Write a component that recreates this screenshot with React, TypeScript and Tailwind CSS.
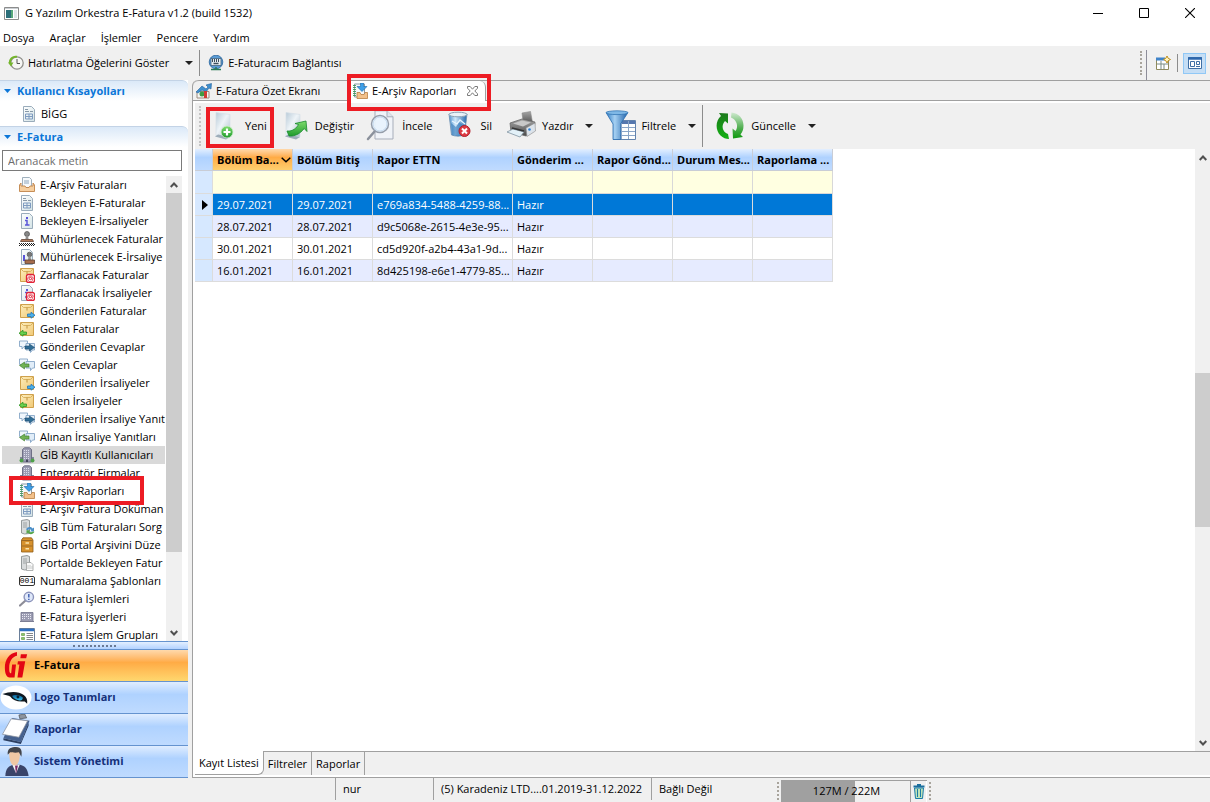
import type { ReactNode } from "react";

interface TreeItem {
  label: string;
  icon: ReactNode;
}

interface Report {
  start: string;
  end: string;
  ettn: string;
  status: string;
}

const reports: Report[] = [
  { start: "29.07.2021", end: "29.07.2021", ettn: "e769a834-5488-4259-88...", status: "Hazır" },
  { start: "28.07.2021", end: "28.07.2021", ettn: "d9c5068e-2615-4e3e-95...", status: "Hazır" },
  { start: "30.01.2021", end: "30.01.2021", ettn: "cd5d920f-a2b4-43a1-9d...", status: "Hazır" },
  { start: "16.01.2021", end: "16.01.2021", ettn: "8d425198-e6e1-4779-85...", status: "Hazır" }
];

/* ---------- gradients shared by the icons ---------- */

function Gradients() {
  return (
    <svg className="absolute h-0 w-0" aria-hidden="true">
      <defs>
        <linearGradient id="paper" x1="0" y1="0" x2="1" y2="1">
          <stop offset="0" stopColor="#ffffff" />
          <stop offset="1" stopColor="#d3e3e6" />
        </linearGradient>
        <linearGradient id="pane" x1="0" y1="0" x2="1" y2="1">
          <stop offset="0" stopColor="#b9cbd8" />
          <stop offset="0.45" stopColor="#eef4f8" />
          <stop offset="1" stopColor="#aebfcb" />
        </linearGradient>
        <linearGradient id="green" x1="0" y1="0" x2="0" y2="1">
          <stop offset="0" stopColor="#7fdc6e" />
          <stop offset="1" stopColor="#1f9a2c" />
        </linearGradient>
        <linearGradient id="deepGreen" x1="0" y1="0" x2="0" y2="1">
          <stop offset="0" stopColor="#1c7a1c" />
          <stop offset="1" stopColor="#12b012" />
        </linearGradient>
        <linearGradient id="paleGreen" x1="0" y1="0" x2="0" y2="1">
          <stop offset="0" stopColor="#cfe9cf" />
          <stop offset="0.6" stopColor="#4fae4f" />
          <stop offset="1" stopColor="#0f9a0f" />
        </linearGradient>
        <linearGradient id="gold" x1="0" y1="0" x2="1" y2="1">
          <stop offset="0" stopColor="#fdeebc" />
          <stop offset="1" stopColor="#f0c976" />
        </linearGradient>
        <linearGradient id="funnel" x1="0" y1="0" x2="1" y2="0">
          <stop offset="0" stopColor="#2f7cc4" />
          <stop offset="0.4" stopColor="#a5d0f2" />
          <stop offset="1" stopColor="#1c5fa8" />
        </linearGradient>
        <linearGradient id="steel" x1="0" y1="0" x2="0" y2="1">
          <stop offset="0" stopColor="#a5a5a5" />
          <stop offset="1" stopColor="#4b4b4b" />
        </linearGradient>
        <linearGradient id="bin" x1="0" y1="0" x2="1" y2="0">
          <stop offset="0" stopColor="#4f93cf" />
          <stop offset="0.35" stopColor="#cfe8fa" />
          <stop offset="1" stopColor="#2268ad" />
        </linearGradient>
        <linearGradient id="iris" x1="0" y1="0" x2="0" y2="1">
          <stop offset="0" stopColor="#0a5f96" />
          <stop offset="1" stopColor="#37c1ee" />
        </linearGradient>
      </defs>
    </svg>
  );
}

/* ---------- 16px icons ---------- */

function Icon16({ children }: { children: ReactNode }) {
  return (
    <svg viewBox="0 0 16 16" className="h-4 w-4 shrink-0" fill="none" aria-hidden="true">
      {children}
    </svg>
  );
}

const page = <path d="M2.5.5h8l3 3v12h-11z" fill="url(#paper)" stroke="#9aacbb" />;

const envelope = (
  <>
    <path d="M1.500 1.500h13v13h-13z" fill="url(#gold)" stroke="#cfa14c" />
    <path d="m2 2 2.500 2.500h7L14 2" stroke="#d9b25f" />
    <path d="M8 4.500v3" stroke="#c0923f" />
  </>
);

const atSign = (
  <>
    <rect x="7.500" y="7.500" width="8" height="8" rx="2" fill="#fff" stroke="#e02338" strokeWidth="1.300" />
    <circle cx="11.400" cy="11.500" r="1.200" stroke="#e02338" />
    <path d="M13.800 13.400a2.800 2.800 0 1 1 .4-2.200c.2 1.600-1.500 1.700-1.500.4" stroke="#e02338" strokeWidth=".8" />
  </>
);

const sendArrow = (
  <path d="M8.500 11h3.500V9.200l4 3-4 3v-1.700H8.500z" fill="#4ab0ea" stroke="#2173b5" strokeWidth=".8" />
);

const receiveArrow = (
  <path d="M7.500 11H4V9.200l-4 3 4 3v-1.700h3.500z" fill="#6bd04f" stroke="#2f9424" strokeWidth=".8" />
);

const infoMark = (
  <>
    <rect x="7" y="4" width="2" height="2" fill="#5a55d8" />
    <path d="M6 7.500h2v4M6 12h4.500" stroke="#5a55d8" strokeWidth="1.500" />
  </>
);

const formPage = (
  <>
    {page}
    <path d="M4 3.500h3M4 5.500h4M9 5.500h3" stroke="#8798a8" />
    <path d="M4.500 8h7v5h-7zM4.500 10.500h7M8 8v5" stroke="#7f9bc0" />
  </>
);

const stamp = (
  <>
    <circle cx="8" cy="3" r="2.500" fill="#888" stroke="#4c4c4c" strokeWidth=".7" />
    <path d="M7 5h2l.6 3H6.400z" fill="#8e8e8e" />
    <path d="M2.500 8.500h11l1 2h-13z" fill="#b57c5c" stroke="#5e4132" strokeWidth=".8" />
  </>
);

const building = (
  <>
    <path d="M1 10h3v5H1zM12 10h3v5h-3z" fill="#84869c" />
    <path d="M3.500 2.500 5.500.8h5l2 1.700V15h-9z" fill="#9b9cb2" stroke="#66687f" strokeWidth=".9" />
    <path d="M5.500 3v9M7.500 3v9M9.500 3v9" stroke="#dcdcea" strokeWidth="1" strokeDasharray="1 1" />
    <path d="M7 12.500h2V15H7z" fill="#45475c" />
  </>
);

const server = (
  <>
    <path d="M2.500 1.500 8 .5l2.500 1v13l-5 .5-3-1z" fill="#d9dcdd" stroke="#7f8587" strokeWidth=".8" />
    <path d="M4 4h4M4 6h4M4 8h4" stroke="#8f9698" strokeWidth=".8" />
  </>
);

const bubbles = (
  <>
    <path d="M.5 2h8v5.500H5L3 10V7.500H.5z" fill="#f0f6fc" stroke="#86a6c6" strokeWidth=".9" />
    <path d="M7 4.500h8.500v6.500h-2l-2 2.500V11H7z" fill="#e1edf8" stroke="#86a6c6" strokeWidth=".9" />
  </>
);

const repliesOut = (
  <Icon16>
    {bubbles}
    <path d="M6 7h4.500V5l5 3.500-5 3.500v-2H6z" fill="#2f6d96" stroke="#1f4c6d" strokeWidth=".6" />
  </Icon16>
);

const repliesIn = (
  <Icon16>
    {bubbles}
    <path d="M10 7H5.500V5l-5 3.500 5 3.500v-2H10z" fill="#72b255" stroke="#3c7d2a" strokeWidth=".6" />
  </Icon16>
);

const reportIcon = (
  <Icon16>
    <path d="M2.500 1h10v13h-10z" fill="#f4f7fa" stroke="#8b9aa6" />
    <path d="M1 2.500h3M1 4.500h3M1 6.500h3M1 8.500h3M1 10.500h3M1 12.500h3" stroke="#3f9a5c" strokeWidth=".9" />
    <path d="M8.500 0h3v3.500H15L10 8.500l-5-5h3.500z" fill="#3d9fe8" stroke="#1b69ab" strokeWidth=".6" />
    <path d="M5 9.500h3l1 2h3l1-2h2.500v6H5z" fill="#f2c08a" stroke="#b97f42" strokeWidth=".8" />
  </Icon16>
);

const treeItems: TreeItem[] = [
  {
    label: "E-Arşiv Faturaları",
    icon: (
      <Icon16>
        <path d="M3.500.5h7l2 2v8h-9z" fill="#f7fafc" stroke="#95a7b5" strokeWidth=".9" />
        <path d="M5 4h5M5 6h5" stroke="#7f9cb5" strokeWidth=".9" />
        <path d="M.5 8 2 6v3h4l1 1.500h3L11 9h3V6l1.500 2v6.500H.5z" fill="#f6cfa0" stroke="#c08349" strokeWidth=".9" />
      </Icon16>
    )
  },
  { label: "Bekleyen E-Faturalar", icon: <Icon16>{formPage}</Icon16> },
  { label: "Bekleyen E-İrsaliyeler", icon: <Icon16>{page}{infoMark}</Icon16> },
  {
    label: "Mühürlenecek Faturalar",
    icon: (
      <Icon16>
        {stamp}
        <path d="M0 12.500h16M0 14.500h16" stroke="#222" strokeDasharray="1 1" />
        <path d="M1 13.500h15" stroke="#222" strokeDasharray="1 1" />
      </Icon16>
    )
  },
  {
    label: "Mühürlenecek E-İrsaliye",
    icon: (
      <Icon16>
        {page}
        <path d="M5 6v6" stroke="#5a55d8" strokeWidth="2" />
        <circle cx="10.500" cy="5.500" r="2.300" fill="#777" stroke="#4c4c4c" strokeWidth=".7" />
        <path d="M9.500 7h2l.5 4h-3z" fill="#8e8e8e" />
        <path d="M6 11h9.500v3.500H6z" fill="#a56c4c" stroke="#5e4132" strokeWidth=".8" />
      </Icon16>
    )
  },
  { label: "Zarflanacak Faturalar", icon: <Icon16>{envelope}{atSign}</Icon16> },
  { label: "Zarflanacak İrsaliyeler", icon: <Icon16>{page}{infoMark}{atSign}</Icon16> },
  { label: "Gönderilen Faturalar", icon: <Icon16>{envelope}{sendArrow}</Icon16> },
  { label: "Gelen Faturalar", icon: <Icon16>{envelope}{receiveArrow}</Icon16> },
  { label: "Gönderilen Cevaplar", icon: repliesOut },
  { label: "Gelen Cevaplar", icon: repliesIn },
  { label: "Gönderilen İrsaliyeler", icon: <Icon16>{envelope}{sendArrow}</Icon16> },
  { label: "Gelen İrsaliyeler", icon: <Icon16>{envelope}{receiveArrow}</Icon16> },
  { label: "Gönderilen İrsaliye Yanıt", icon: repliesOut },
  { label: "Alınan İrsaliye Yanıtları", icon: repliesIn },
  {
    label: "GİB Kayıtlı Kullanıcıları",
    icon: (
      <Icon16>
        {building}
        <circle cx="2.500" cy="13.500" r="2" fill="#4f9f4a" />
        <circle cx="13.500" cy="13.500" r="2" fill="#4f9f4a" />
      </Icon16>
    )
  },
  { label: "Entegratör Firmalar", icon: <Icon16>{building}</Icon16> },
  { label: "E-Arşiv Raporları", icon: reportIcon },
  { label: "E-Arşiv Fatura Doküman", icon: <Icon16>{formPage}</Icon16> },
  {
    label: "GİB Tüm Faturaları Sorg",
    icon: (
      <Icon16>
        {server}
        <path d="M7 10.500c1.500-3 5-3 6.500-1l1.500-1v4h-4l1.300-1.200c-1-1.300-2.600-1.300-3.600 0z" fill="#4e90c8" />
        <path d="M15.500 12.800c-1.500 3-5 3-6.500 1l-1.500 1v-3.500h3.600l-1 1c1 1.300 2.600 1.300 3.600.2z" fill="#55a64b" />
      </Icon16>
    )
  },
  {
    label: "GİB Portal Arşivini Düze",
    icon: (
      <Icon16>
        <path d="M2.500 3 4 .8h8.500L14 3v12H2.500z" fill="#d7922e" stroke="#8f5a14" strokeWidth=".8" />
        <path d="M3 3.500h10.500M3 9h10.500" stroke="#9c6a26" />
        <path d="M6.500 6h3.500M6.500 11.800h3.500" stroke="#fbe3ab" strokeWidth="1.500" />
      </Icon16>
    )
  },
  {
    label: "Portalde Bekleyen Fatur",
    icon: (
      <Icon16>
        {server}
        <path d="M7.500 7.500h4.500l2 2v6H7.500z" fill="#fafafa" stroke="#9c9fa0" strokeWidth=".8" />
        <path d="M9 10v4M11 10v4M13 11v3" stroke="#b9bcbd" strokeWidth=".8" />
      </Icon16>
    )
  },
  {
    label: "Numaralama Şablonları",
    icon: (
      <span className="flex h-[10px] w-4 shrink-0 items-center justify-center rounded-xs border border-[#333] bg-white font-['Liberation_Mono',monospace] text-[8px] leading-none">
        001
      </span>
    )
  },
  {
    label: "E-Fatura İşlemleri",
    icon: (
      <Icon16>
        <path d="M1 14.500 6 10" stroke="#8d8d98" strokeWidth="2.200" strokeLinecap="round" />
        <circle cx="9.800" cy="6" r="4.700" fill="#dfe8fa" stroke="#8c94bb" strokeWidth="1.400" />
        <path d="M9.800 3v3.500M9.800 7.700v1.300" stroke="#4464b4" strokeWidth="1.500" />
      </Icon16>
    )
  },
  {
    label: "E-Fatura İşyerleri",
    icon: (
      <Icon16>
        <path d="M2 3.500h12v9H2z" fill="#9b9cb2" stroke="#70728c" strokeWidth=".8" />
        <path d="M3.500 5v6M5.500 5v6M7.500 5v4M9.500 5v6M11.500 5v6" stroke="#e9e9f3" strokeDasharray="1 1" />
        <path d="M1 12.500h14" stroke="#7c7e94" />
      </Icon16>
    )
  },
  {
    label: "E-Fatura İşlem Grupları",
    icon: (
      <Icon16>
        <path d="M.5 1.500h15v13H.5z" fill="#fff" stroke="#6a7f9a" />
        <path d="M1 3h14" stroke="#2e6fc2" strokeWidth="2.500" />
        <path d="M2.500 6.500h3v2h-3zM2.500 10.500h3v2h-3z" fill="#8cc66a" stroke="#5a9440" strokeWidth=".6" />
        <path d="M7.500 6.500H14M7.500 8.500H14M7.500 10.500H14M7.500 12.500H14" stroke="#74787e" strokeWidth=".9" />
      </Icon16>
    )
  }
];

/* ---------- 32px toolbar icons ---------- */

function Icon32({ children }: { children: ReactNode }) {
  return (
    <svg viewBox="0 0 32 32" className="h-8 w-8 shrink-0" fill="none" aria-hidden="true">
      {children}
    </svg>
  );
}

const glassPane = (
  <>
    <path d="M7 2.500 21 4.500V27L9 25l-2 1.500z" fill="url(#pane)" stroke="#d5e0e8" strokeWidth=".7" />
    <path d="M6 26.500 17 29.500l4-2.500L9 24.500z" fill="#9dadb9" />
  </>
);

const newIcon = (
  <Icon32>
    {glassPane}
    <circle cx="18" cy="22" r="6" fill="url(#green)" stroke="#cdeccb" strokeWidth=".8" />
    <path d="M18 18.500v7M14.500 22h7" stroke="#fff" strokeWidth="2.200" />
  </Icon32>
);

const editIcon = (
  <Icon32>
    {glassPane}
    <path
      d="M8 21c6 .5 9.500-3 11.500-6.500L16 13.500 27 11l1 10.500-2.800-3C21 24 15.500 26.500 10 26z"
      fill="url(#green)"
      stroke="#188a2d"
      strokeWidth=".8"
    />
  </Icon32>
);

const inspectIcon = (
  <Icon32>
    <path d="M9 .8h12l6 6V29H9z" fill="#f0f3f8" stroke="#a7adba" />
    <path d="M21 .8v6h6" fill="#dfe4ec" stroke="#a7adba" />
    <path d="m2 29 7-8" stroke="#8b919c" strokeWidth="2.500" strokeLinecap="round" />
    <circle cx="14" cy="14" r="8.500" fill="#e8f3fd" fillOpacity=".92" stroke="#959daa" strokeWidth="1.500" />
    <circle cx="14" cy="14" r="7" stroke="#c4d9ee" />
  </Icon32>
);

const deleteIcon = (
  <Icon32>
    <path d="M5 4h18l-2.500 21c-4 1.500-9 1.500-13 0z" fill="url(#bin)" stroke="#6c8eae" strokeWidth=".8" />
    <path d="m7 13 5 4 3-5 6 5-1 8c-4 1.500-8 1.500-12 0z" fill="#2f74b5" fillOpacity=".6" />
    <ellipse cx="14" cy="4.500" rx="9" ry="2.300" fill="#e9f1f7" stroke="#8ba0b3" />
    <path d="m8 11 5 3 3-4 5 4" stroke="#e7f5ff" strokeWidth="1.300" />
    <circle cx="20.500" cy="21" r="5.500" fill="#dc3a43" stroke="#b2202d" />
    <path d="m18 18.500 5 5M23 18.500l-5 5" stroke="#fff" strokeWidth="2" />
  </Icon32>
);

const printIcon = (
  <Icon32>
    <path d="m16 3 8.500-1.500 2 11-9 2z" fill="url(#steel)" stroke="#888" strokeWidth=".6" />
    <path d="m4 13 12-4 13 3-1 9-8 5-15-4z" fill="url(#steel)" stroke="#5e5e5e" strokeWidth=".7" />
    <path d="m7 13.500 9-3 9 2-8 4z" fill="#c8c8c8" />
    <path d="m20 18 9-5 .5 8-8.500 5.500z" fill="#dce3ea" stroke="#8b8b8b" strokeWidth=".6" />
    <circle cx="23.500" cy="19.500" r="1.300" fill="#3283d7" />
    <path d="m1 22 6-3 11 3-4 5z" fill="#e3f1f8" stroke="#8294a1" strokeWidth=".8" />
    <path d="m6 18 12 3" stroke="#363636" strokeWidth="1.500" />
  </Icon32>
);

const filterIcon = (
  <Icon32>
    <path d="M8.500 10.500h22v19h-22z" fill="#fdfefe" stroke="#6283ad" />
    <path d="M9 12.500h21" stroke="#5577ae" strokeWidth="3" />
    <path d="M9 17.500h21M9 21.500h21M9 25.500h21M16.500 11v18M23.500 11v18" stroke="#8aa5c7" />
    <path d="M1 2.500h22L15.500 14v15.500H8V14z" fill="url(#funnel)" stroke="#2a6cae" strokeWidth=".8" />
    <ellipse cx="12" cy="2.700" rx="11" ry="1.900" fill="#7fb8e6" stroke="#3577b5" strokeWidth=".8" />
  </Icon32>
);

const refreshIcon = (
  <Icon32>
    <path d="M13 3.500 4 3l2 3C0 11 .5 20.500 5.500 25.500 8 28 11 29 14 29l-1-5C7 22 6 15 10 11l3 2.500z" fill="url(#deepGreen)" />
    <path d="M16.500 2.500c7 .5 12 6 12 13 0 4-1 6.500-3 9l2.500 2.500-10 1.500-.5-10 3 2.500c3.500-4.500 1-11.500-4.500-13.500z" fill="url(#paleGreen)" />
  </Icon32>
);

/* ---------- small parts ---------- */

function Caret() {
  return (
    <svg viewBox="0 0 8 4" className="h-1 w-2 shrink-0" aria-hidden="true">
      <path d="M0 0h8L4 4z" fill="#222" />
    </svg>
  );
}

function Chevron({ up = false }: { up?: boolean }) {
  return (
    <svg viewBox="0 0 8 6" className="h-[6px] w-2" fill="none" aria-hidden="true">
      <path d={up ? "M.7 5 4 1.500 7.300 5" : "M.7 1 4 4.500 7.300 1"} stroke="#505050" strokeWidth="2" />
    </svg>
  );
}

function Highlight({ className }: { className: string }) {
  return <span className={`pointer-events-none absolute z-10 border-4 border-[#ed1c24] ${className}`} />;
}

function ToolButton({ icon, label, menu = false }: { icon: ReactNode; label: string; menu?: boolean }) {
  return (
    <button className="flex items-center gap-1">
      {icon}
      <span>{label}</span>
      {menu && (
        <span className="ml-2">
          <Caret />
        </span>
      )}
    </button>
  );
}

function PanelHeader({ label }: { label: string }) {
  return (
    <button className="flex h-[21px] w-full shrink-0 items-center gap-[6px] rounded-tr-md border-t border-[#c3d3e6] bg-linear-to-b from-[#dbe9f8] to-white pl-1 text-left font-bold text-[#0b76d8]">
      <svg viewBox="0 0 7 4" className="h-1 w-[7px]" aria-hidden="true">
        <path d="M0 0h7L3.500 4z" fill="#0b76d8" />
      </svg>
      {label}
    </button>
  );
}

/* ---------- page sections ---------- */

function TitleBar() {
  return (
    <header className="bg-white">
      <div className="flex h-[26px] items-center pl-1">
        <svg viewBox="0 0 15 13" className="h-[13px] w-[15px]" aria-hidden="true">
          <path d="M.5.500h14v12H.5z" fill="#fff" stroke="#8c8c8c" />
          <path d="M1 1.500h13" stroke="#c9ced2" />
          <path d="M2 3h5v8H2z" fill="#2c6f7a" />
          <path d="M7 3h2v8H7z" fill="#57a77a" />
          <path d="M10 3h3v8h-3z" fill="#dfe6ea" />
        </svg>
        <h1 className="ml-[6px] flex-1">G Yazılım Orkestra E-Fatura v1.2 (build 1532)</h1>
        <div className="flex gap-[6px]">
          <button aria-label="Simge durumuna küçült" className="flex w-10 justify-center">
            <svg viewBox="0 0 10 10" className="h-[10px] w-[10px]"><path d="M0 5.500h10" stroke="#000" /></svg>
          </button>
          <button aria-label="Ekranı kapla" className="flex w-10 justify-center">
            <svg viewBox="0 0 10 10" className="h-[10px] w-[10px]" fill="none"><path d="M.5.500h9v9h-9z" stroke="#000" /></svg>
          </button>
          <button aria-label="Kapat" className="flex w-10 justify-center">
            <svg viewBox="0 0 10 10" className="h-[10px] w-[10px]"><path d="m0 0 10 10M10 0 0 10" stroke="#000" strokeWidth="1.100" /></svg>
          </button>
        </div>
      </div>
      <nav className="flex h-5 items-end gap-[15px] pl-[3px]">
        {["Dosya", "Araçlar", "İşlemler", "Pencere", "Yardım"].map((item) => (
          <button key={item}>{item}</button>
        ))}
      </nav>
    </header>
  );
}

function MainToolbar() {
  return (
    <div className="flex h-[34px] items-center pl-2">
      <button className="flex items-center gap-1">
        <Icon16>
          <circle cx="9" cy="8" r="6.200" fill="#f6f6f4" stroke="#8f8f8b" strokeWidth="1.300" />
          <path d="M9 4v4.500h3" stroke="#555" />
          <path d="M2 9C1 4 5 1 9 1.800" stroke="#74b52c" strokeWidth="2" />
          <path d="M0 7.500h5.500L3 11.500z" fill="#74b52c" />
        </Icon16>
        Hatırlatma Öğelerini Göster
        <span className="ml-3">
          <Caret />
        </span>
      </button>
      <span className="ml-[6px] h-[26px] w-px bg-[#8c8c8c]" />
      <button className="ml-2 flex items-center gap-1">
        <Icon16>
          <circle cx="8" cy="7" r="6.800" fill="#5a9bd4" stroke="#28649e" strokeWidth=".8" />
          <path d="M3 3.500h10v7H3z" fill="#e8eef2" stroke="#43637d" strokeWidth=".8" />
          <path d="M4.500 4v3M6.500 4v3M8.500 4v3M10.500 4v3" stroke="#3b4e5c" />
          <path d="M5.500 8.500h5" stroke="#3b4e5c" strokeWidth="1.500" />
          <path d="M8 12v3M3 14.500h10" stroke="#2a7a55" strokeWidth="1.500" />
        </Icon16>
        E-Faturacım Bağlantısı
      </button>
      <div className="ml-auto flex h-full items-center pr-1">
        <span className="h-6 border-l-2 border-dotted border-[#a8a49c]" />
        <span className="ml-1 h-[30px] w-px self-end bg-[#8d8d99]" />
        <button aria-label="Perspektif aç" className="ml-2">
          <Icon16>
            <path d="M1.500 3.500h12v11h-12z" fill="#fff" stroke="#8f8a5c" />
            <path d="M1 4h9" stroke="#3f83c9" strokeWidth="3" />
            <path d="M6 6v8.500M2 9h11M9 9v5" stroke="#7b8d86" />
            <path d="m12 1 1.200 2.300L15.500 4.500l-2.300 1.200L12 8l-1.200-2.300L8.500 4.500l2.300-1.200z" fill="#fff3c0" stroke="#c0901c" />
          </Icon16>
        </button>
        <span className="ml-[6px] h-[18px] w-px bg-[#8c8c8c]" />
        <button
          aria-label="Varsayılan perspektif"
          className="ml-[5px] flex h-[21px] w-[23px] items-center justify-center border border-[#90c8f6] bg-[#c5def5]"
        >
          <Icon16>
            <path d="M1.500 2.500h13v11h-13z" fill="#fff" stroke="#3f6fa5" />
            <path d="M1 3.500h14" stroke="#2c67ae" strokeWidth="2.500" />
            <path d="M3.500 6.500h4v5h-4zM9.500 6.500h3v3h-3z" stroke="#3f6fa5" />
            <path d="M9 11.500h4" stroke="#3f6fa5" />
          </Icon16>
        </button>
      </div>
    </div>
  );
}

function ModuleButton({ label, active = false, children }: { label: string; active?: boolean; children: ReactNode }) {
  return (
    <button
      className={`flex h-8 w-full items-center gap-[2px] border-t border-[#6593cf] text-left font-bold ${
        active
          ? "bg-linear-to-b from-[#ffd9ab] from-0% via-[#ffab45] via-40% to-[#fed76e] text-black"
          : "bg-linear-to-b from-[#e0edff] from-0% via-[#afd2ff] via-40% to-[#bfdbff] text-[#15317a]"
      }`}
    >
      <svg viewBox="0 0 32 32" className="h-[31px] w-8 shrink-0" fill="none" aria-hidden="true">
        {children}
      </svg>
      <span className="pb-[2px]">{label}</span>
    </button>
  );
}

function Sidebar() {
  const selected = "GİB Kayıtlı Kullanıcıları";

  return (
    <aside className="flex min-h-0 w-[188px] shrink-0 flex-col bg-white">
      <PanelHeader label="Kullanıcı Kısayolları" />
      <a href="#bigg" className="flex h-[25px] shrink-0 items-center gap-1 pl-[21px]">
        <Icon16>{formPage}</Icon16>
        BİGG
      </a>
      <PanelHeader label="E-Fatura" />
      <div className="px-[2px] pt-[3px] pb-[5px]">
        <input
          aria-label="Aranacak metin"
          placeholder="Aranacak metin"
          className="block h-[21px] w-[180px] border border-[#7a7a7a] bg-white px-[5px] placeholder:text-[#6d6d6d]"
        />
      </div>

      <div className="relative flex min-h-0 flex-1">
        <ul className="min-w-0 flex-1 overflow-hidden pl-[2px]">
          {treeItems.map((item) => (
            <li key={item.label}>
              <a
                href="#kayit"
                className={`flex h-[18px] items-center gap-[5px] pl-[17px] whitespace-nowrap ${
                  item.label === selected ? "bg-[#d9d9d9]" : ""
                }`}
              >
                {item.icon}
                <span>{item.label}</span>
              </a>
            </li>
          ))}
        </ul>
        <Highlight className="top-[300px] left-[9px] h-[29px] w-[135px]" />
        <div className="mr-[6px] ml-px flex w-4 flex-col bg-[#f0f0f0]">
          <button aria-label="Yukarı kaydır" className="flex h-[17px] items-center justify-center">
            <Chevron up />
          </button>
          <span className="h-[359px] bg-[#cdcdcd]" />
          <button aria-label="Aşağı kaydır" className="mt-auto flex h-[17px] items-center justify-center">
            <Chevron />
          </button>
        </div>
      </div>

      <div className="flex h-2 items-center justify-center border-t border-[#6593cf] bg-linear-to-b from-[#e3efff] to-[#b3d2ff]">
        <span className="w-[43px] border-t-2 border-dotted border-[#6b7a94]" />
      </div>
      <nav className="border-b border-[#6593cf]">
        <ModuleButton label="E-Fatura" active>
          <path d="M17 2C9 3 4.500 10 4.500 18c0 6 1.500 10 5 10.500h5L16 15h-4l-1 9c-2 0-2-3-2-6 0-6 3-11 8-12z" fill="#e30613" />
          <path d="M21 4.500h6.500l-1 4h-6zM18 11.500h7.500l-3 17h-5l2-13.500h-2z" fill="#e30613" />
        </ModuleButton>
        <ModuleButton label="Logo Tanımları">
          <ellipse cx="16" cy="16" rx="16" ry="12.500" fill="#fff" />
          <path d="M2 12.500c8-3 17-3 22 1 3 2 4 5 3.500 9L25 20c-7 1-12-1-15-5-2-1-5-1.500-8-2.500z" fill="#101820" />
          <path d="M12 14.500c2-1.500 7-1.500 11 1.500 0 2-1 3-3 3-3 0-6-1.500-8-4.500z" fill="url(#iris)" />
          <circle cx="18" cy="15.500" r="1.500" fill="#05202f" />
        </ModuleButton>
        <ModuleButton label="Raporlar">
          <path d="m12 4 18 3-9 22-18-4z" fill="#45618f" />
          <path d="m3 25 18 4 8-20v3l-8 19-18-4z" fill="#2c3f61" />
          <path d="m11 5 17 2-9 17-17-3z" fill="#fff" stroke="#8a92a0" strokeWidth=".8" />
          <path d="m19 1 6-1 2 4-7 1z" fill="#8d949e" stroke="#4a4f56" strokeWidth=".7" />
        </ModuleButton>
        <ModuleButton label="Sistem Yönetimi">
          <path d="M5 31c0-8 4-11 9-12h5c6 1 9 4 10 12z" fill="#3a4469" />
          <path d="m12 19 4 9 4-9z" fill="#f3f4f8" />
          <path d="m15 20 1 9 2-9z" fill="#7d2b66" />
          <path d="M9 8c0-5 11-5 11 0 0 7-2 12-5.500 12S9 15 9 8z" fill="#f0c8a4" />
          <path d="M7.500 9C6.500 2 12 1 16 1c6 0 6.500 5 5.500 10L19 6.500c-4 1-7 0-9 0z" fill="#42444a" />
        </ModuleButton>
      </nav>
    </aside>
  );
}

function EditorTabs() {
  return (
    <div className="relative flex h-[21px] shrink-0 rounded-tl-md border-t border-b border-[#a0a0a0]">
      <button className="flex w-[158px] items-center gap-1 pl-[3px]">
        <Icon16>
          <path d="M1 8.500h12v6.500H1z" fill="#f4f4f4" stroke="#9b8c7e" />
          <path d="M0 9 6 3l4 3 2-2-2-2 5.500-1.500L15 6l-2-1-3 4-4-2-4 3z" fill="#3f8fce" stroke="#22609c" strokeWidth=".6" />
          <circle cx="6" cy="11" r="2.500" fill="#3d9b45" />
          <path d="M8 8h3v7H8z" fill="#cf3b33" />
        </Icon16>
        E-Fatura Özet Ekranı
      </button>
      <div className="-mb-px flex w-[135px] items-center rounded-tr-md border-r border-[#a0a0a0] bg-white pl-px">
        <button className="flex items-center gap-1">
          {reportIcon}
          E-Arşiv Raporları
        </button>
        <button aria-label="Sekmeyi kapat" className="mr-[7px] ml-auto">
          <svg viewBox="0 0 11 10" className="h-[10px] w-[11px]" fill="#fff" aria-hidden="true">
            <path d="M.5.500h2.700l2.300 2.700L7.800.500h2.700v1.700L7.800 5l2.700 2.800v1.700H7.800L5.500 6.800 3.200 9.500H.5V7.800L3.200 5 .5 2.200z" stroke="#7a7a7a" />
          </svg>
        </button>
      </div>
      <Highlight className="-top-[7px] left-[154px] h-[37px] w-[144px]" />
    </div>
  );
}

function RecordToolbar() {
  return (
    <div className="flex h-[46px] shrink-0 items-center bg-[#f0f0f0] pl-1">
      <span className="h-10 border-l-2 border-dotted border-[#c4c4c4]" />
      <div className="ml-2 flex items-center gap-3">
        <div className="relative">
          <ToolButton icon={newIcon} label="Yeni" />
          <Highlight className="-top-[3px] -left-[3px] h-[41px] w-[68px]" />
        </div>
        <ToolButton icon={editIcon} label="Değiştir" />
        <ToolButton icon={inspectIcon} label="İncele" />
        <ToolButton icon={deleteIcon} label="Sil" />
      </div>
      <div className="ml-[14px] flex items-center gap-3">
        <ToolButton icon={printIcon} label="Yazdır" menu />
        <ToolButton icon={filterIcon} label="Filtrele" menu />
      </div>
      <span className="mr-3 ml-[6px] h-[42px] w-px bg-[#8c8c8c]" />
      <ToolButton icon={refreshIcon} label="Güncelle" menu />
    </div>
  );
}

const columns = [
  "Bölüm Ba...",
  "Bölüm Bitiş",
  "Rapor ETTN",
  "Gönderim ...",
  "Rapor Gönd...",
  "Durum Mes...",
  "Raporlama ..."
];

function RecordTable() {
  return (
    <table className="w-[638px] table-fixed border-separate border-spacing-0 self-start text-left whitespace-nowrap">
      <colgroup>
        <col className="w-[18px]" />
        <col className="w-20" />
        <col className="w-20" />
        <col className="w-[140px]" />
        <col className="w-20" />
        <col className="w-20" />
        <col className="w-20" />
        <col className="w-20" />
      </colgroup>
      <thead>
        <tr className="h-[22px]">
          <td className="border-r border-b border-[#c9cdd6] bg-linear-to-b from-[#e3efff] via-[#afd2ff] via-40% to-[#c0dbff]" />
          {columns.map((column, i) => (
            <th
              key={column}
              scope="col"
              className={`border-r border-b border-[#c9cdd6] p-0 pl-1 font-bold ${
                i === 0
                  ? "bg-linear-to-b from-[#ffd9ab] via-[#ffab45] via-40% to-[#fecf6e]"
                  : "bg-linear-to-b from-[#e3efff] via-[#afd2ff] via-40% to-[#c0dbff]"
              }`}
            >
              {i === 0 ? (
                <span className="flex items-center justify-between pr-px">
                  {column}
                  <svg viewBox="0 0 10 6" className="h-[6px] w-[10px]" fill="none" aria-hidden="true">
                    <path d="m.7.700 4.300 4 4.300-4" stroke="#000" strokeWidth="1.500" />
                  </svg>
                </span>
              ) : (
                column
              )}
            </th>
          ))}
        </tr>
      </thead>
      <tbody>
        <tr className="h-[23px]">
          <td className="border-r border-b border-[#dcdcdc] bg-[#d6e8ff]" />
          {columns.map((column) => (
            <td key={column} className="border-r border-b border-[#d8d8d8] bg-[#ffffe1]" />
          ))}
        </tr>
        {reports.map((report, i) => (
          <tr
            key={report.ettn}
            className={`h-[22px] ${i === 0 ? "bg-[#0078d7] text-white" : i % 2 ? "bg-[#e6ebff]" : "bg-white"}`}
          >
            <td className="border-r border-b border-[#dcdcdc] bg-[#d6e8ff] p-0">
              {i === 0 && (
                <svg viewBox="0 0 6 10" className="ml-[7px] h-[10px] w-[6px]" aria-hidden="true">
                  <path d="M0 0v10l6-5z" fill="#000" />
                </svg>
              )}
            </td>
            {[report.start, report.end, report.ettn, report.status, "", "", ""].map((value, j) => (
              <td key={j} className="border-r border-b border-[#dcdcdc] p-0 pl-1">
                {value}
              </td>
            ))}
          </tr>
        ))}
      </tbody>
    </table>
  );
}

function BottomTabs() {
  return (
    <div className="flex h-6 shrink-0 bg-[#f0f0f0]">
      <button className="rounded-br-md border-r border-b border-[#a0a0a0] bg-white px-1">Kayıt Listesi</button>
      <div className="flex flex-1 border-t border-[#a0a0a0]">
        <button className="border-r border-[#a0a0a0] px-1">Filtreler</button>
        <button className="border-r border-[#a0a0a0] px-1">Raporlar</button>
      </div>
    </div>
  );
}

function StatusBar() {
  return (
    <footer className="flex h-6 shrink-0 items-start">
      <div className="h-[22px] w-[335px]" />
      <div className="h-[22px] w-[98px] border-l border-[#a0a0a0] pl-[7px] leading-[22px]">nur</div>
      <div className="h-[22px] w-[218px] border-l border-[#a0a0a0] pl-[7px] leading-[22px]">
        (5) Karadeniz LTD....01.2019-31.12.2022
      </div>
      <div className="h-[22px] w-[126px] border-l border-[#a0a0a0] pl-[7px] leading-[22px]">Bağlı Değil</div>
      <span className="mt-1 h-[18px] border-l-2 border-dotted border-[#a8a49c]" />
      <div className="mt-[2px] ml-[2px] flex h-[22px] border-t border-[#a0a0a0]">
        <div className="relative w-[130px] border-r border-[#a0a0a0] pl-[2px] text-center leading-[19px]">
          <span className="absolute inset-y-0 left-0 bg-[#a0a0a0]" style={{ width: `${(127 / 222) * 100}%` }} />
          <span className="relative">127M / 222M</span>
        </div>
        <button aria-label="Belleği temizle" className="flex w-4 items-center justify-center border-r border-white">
          <svg viewBox="0 0 12 15" className="h-[15px] w-3" fill="none" aria-hidden="true">
            <path d="M1.500 4h9l-1 10.500h-7z" fill="#bfe2b8" stroke="#1a7ca8" />
            <path d="M4.500 5v8M7.500 5v8" stroke="#1a7ca8" />
            <path d="M.5 2.500h11M4 1h4" stroke="#1a6f9e" strokeWidth="1.800" />
          </svg>
        </button>
      </div>
      <span className="mt-1 ml-[2px] h-[18px] border-l-2 border-dotted border-[#a8a49c]" />
    </footer>
  );
}

export default function App() {
  return (
    <div className="flex h-screen flex-col overflow-hidden bg-[#f0f0f0] font-['Open_Sans',sans-serif] text-[11px] leading-4 text-black">
      <Gradients />
      <TitleBar />
      <MainToolbar />
      <div className="flex min-h-0 flex-1">
        <Sidebar />
        <main className="ml-1 flex min-w-0 flex-1 flex-col rounded-tl-md border-b border-l border-[#a0a0a0]">
          <EditorTabs />
          <div className="flex min-h-0 flex-1 flex-col border-t-2 border-b-2 border-l-2 border-white">
            <RecordToolbar />
            <div className="flex min-h-0 flex-1 bg-white">
              <RecordTable />
              <div className="ml-auto flex w-[15px] flex-col bg-[#f0f0f0]">
                <button aria-label="Yukarı kaydır" className="flex h-[17px] items-center justify-center">
                  <Chevron up />
                </button>
                <div className="flex flex-1 flex-col">
                  <span className="flex-[207]" />
                  <span className="flex-[154] bg-[#cdcdcd]" />
                  <span className="flex-[207]" />
                </div>
                <button aria-label="Aşağı kaydır" className="flex h-[17px] items-center justify-center">
                  <Chevron />
                </button>
              </div>
            </div>
            <BottomTabs />
          </div>
        </main>
      </div>
      <StatusBar />
    </div>
  );
}
